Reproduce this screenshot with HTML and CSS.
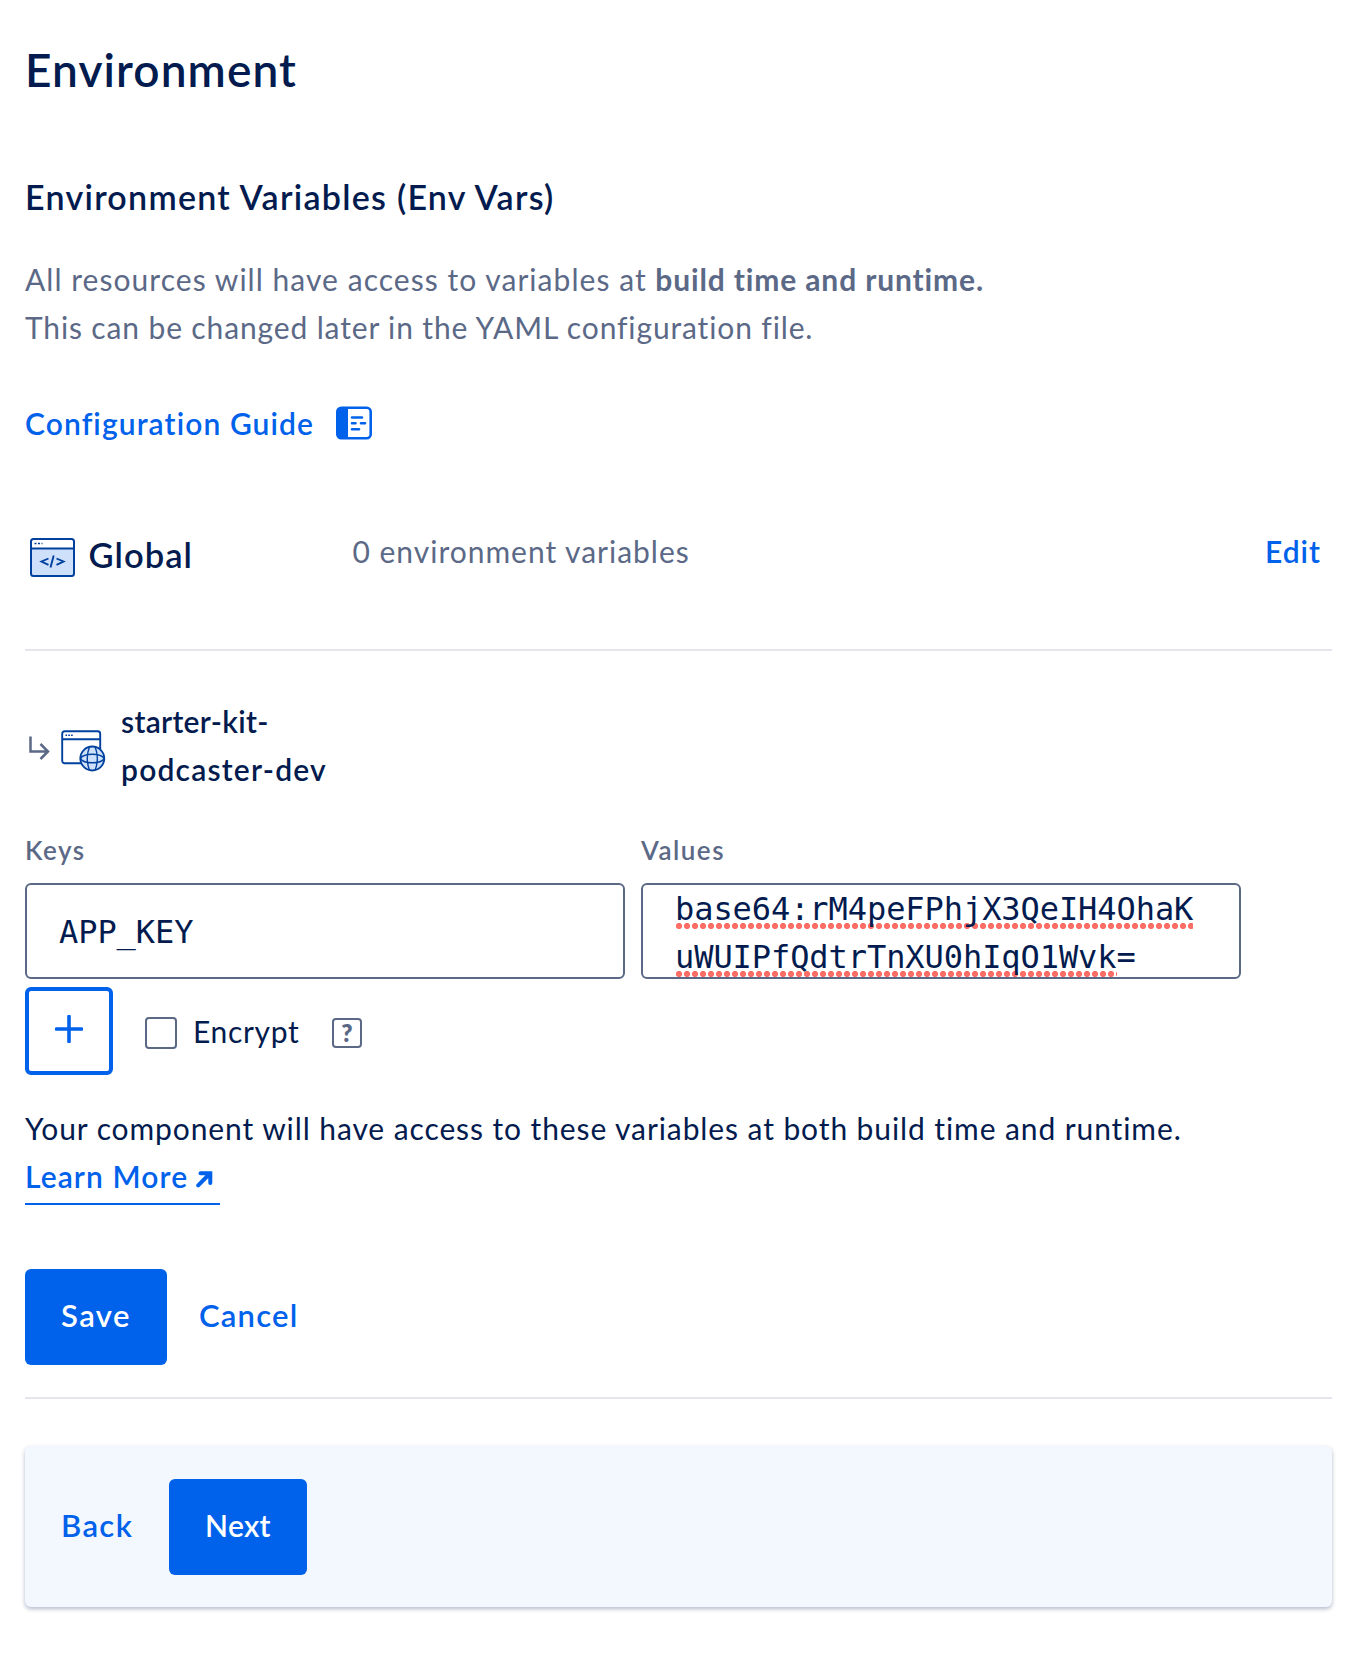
FILE: index.html
```html
<!DOCTYPE html>
<html lang="en">
<head>
<meta charset="utf-8">
<title>Environment</title>
<link rel="stylesheet" href="styles.css">
</head>
<body>
<main class="page">
  <h1 class="title">Environment</h1>
  <h2 class="subtitle">Environment Variables (Env Vars)</h2>
  <p class="intro"><span class="intro-lead">All resources will have access to variables at</span> <strong>build time and runtime.</strong><br>This can be changed later in the YAML configuration file.</p>
  <a class="guide link"><span>Configuration Guide</span>
    <svg class="guide-icon" width="36" height="34" viewBox="0 0 36 34" fill="none" stroke="#0061eb" stroke-width="2.6">
      <rect x="1.3" y="1.7" width="33.4" height="30.6" rx="4"/>
      <path d="M5 1.5H12V32.5H5Q1 32.5 1 28.5V5.5Q1 1.5 5 1.5Z" fill="#0061eb" stroke="none"/>
      <path d="M16 11.5H26M16 17.3H19.5M25 17.3H29M16 23.3H23" stroke-linecap="round" stroke-width="2.6"/>
    </svg>
  </a>

  <section class="global">
    <svg class="global-icon" width="45" height="39" viewBox="0 0 45 39" fill="none" stroke="#00419e" stroke-width="2">
      <path d="M2 11H43V37H2Z" fill="#cfe0fb" stroke="none"/>
      <rect x="1" y="1" width="43" height="37" rx="2.5"/>
      <path d="M1 10.5H44"/>
      <path d="M4.5 5.5H12.5" stroke-dasharray="2 1.5" stroke-width="1.6"/>
      <path d="M18.5 20.5L11.5 23.5L18.5 26.8M26.5 20.5L33.5 23.5L26.5 26.8M23.7 17.5L20.5 29.5" stroke-width="1.9"/>
    </svg>
    <h3 class="global-name">Global</h3>
    <span class="global-count">0 environment variables</span>
    <a class="global-edit link">Edit</a>
  </section>

  <section class="component">
    <header class="component-head">
      <svg class="arrow-icon" width="21" height="24" viewBox="0 0 21 24" fill="none" stroke="#5b6987" stroke-width="2.5">
        <path d="M1.5 .5V15.5H19M11.5 8L19 15.5L11.5 23"/>
      </svg>
      <svg class="web-icon" width="45" height="42" viewBox="0 0 45 42" fill="none" stroke="#00419e" stroke-width="1.9">
        <rect x="1.2" y="1.2" width="38" height="32" rx="2.5"/>
        <path d="M1 9.2H39"/>
        <path d="M4.5 5.2H12" stroke-dasharray="1.6 1.2" stroke-width="1.5"/>
        <circle cx="31.3" cy="28.5" r="12" fill="#cfe0fb" stroke-width="1.8"/>
        <path d="M19.3 28.5Q22 24.3 31.3 24.3T43.3 28.5M19.3 28.5Q22 32.7 31.3 32.7T43.3 28.5M28.5 16.8Q24 28.5 28.5 40.2M34.1 16.8Q38.6 28.5 34.1 40.2" stroke-width="1.4"/>
      </svg>
      <h3 class="component-name"><span class="tight">starter-kit-</span><br>podcaster-dev</h3>
    </header>

    <div class="fields">
      <label class="field"><span class="field-label">Keys</span><span class="box box-key">APP_KEY</span></label>
      <label class="field"><span class="field-label">Values</span><span class="box box-value"><span class="misspelled">base64:rM4peFPhjX3QeIH4OhaK</span><br><span class="misspelled">uWUIPfQdtrTnXU0hIqO1Wvk</span>=</span></label>
    </div>

    <div class="options">
      <button class="add" aria-label="Add">
        <svg width="28" height="28" viewBox="0 0 28 28" stroke="#0061eb" stroke-width="3.6" stroke-linecap="round"><path d="M14 1.5V26.5M1.5 14H26.5"/></svg>
      </button>
      <span class="checkbox"></span>
      <span class="encrypt">Encrypt</span>
      <span class="help">?</span>
    </div>

    <p class="note">Your component will have access to these variables at both build time and runtime.</p>
    <a class="learn link"><span>Learn More</span>
      <svg class="learn-icon" width="17" height="17" viewBox="0 0 17 17" fill="none" stroke="#0061eb" stroke-width="4" stroke-linecap="round"><path d="M2.2 14.3L13 3.5M4.5 2.3H14.3V12"/></svg>
    </a>

    <div class="actions">
      <button class="button button-save">Save</button>
      <a class="cancel link">Cancel</a>
    </div>
  </section>

  <footer class="footer">
    <a class="back link">Back</a>
    <button class="button button-next">Next</button>
  </footer>
</main>
</body>
</html>
```
FILE: styles.css
```css
* { box-sizing: border-box; margin: 0; padding: 0; }
body {
  background: #fff;
  color: #031b4e;
  font: 400 30px/48px Lato, "Open Sans", sans-serif;
}
button { border: 0; font: inherit; }
svg { display: block; flex: none; }
h1, h2, h3 { font-weight: 600; }
.page { width: 1332px; height: 1658px; padding: 42px 0 0 25px; }
.link { color: #0061eb; font-weight: 600; letter-spacing: 1.1px; }

.title { font-size: 46px; line-height: 56px; letter-spacing: 1.1px; }
.subtitle { margin-top: 75px; font-size: 34px; letter-spacing: 1.27px; }
.intro { margin-top: 34px; color: #5b6987; letter-spacing: .86px; white-space: nowrap; }
.intro-lead { letter-spacing: 1.04px; }
.intro strong { font-weight: 700; letter-spacing: .86px; }
.guide { display: flex; align-items: center; gap: 22px; margin-top: 48px; }

.global { display: flex; height: 126px; margin-top: 78px; padding-top: 2px; border-bottom: 2px solid #e5e5ed; }
.global-icon { margin: 11px 14px 0 4.500px; }
.global-name { width: 264px; margin-top: 4px; font-size: 34.5px; letter-spacing: 1.03px; }
.global-count { color: #5b6987; letter-spacing: .98px; }
.global-edit { margin-left: auto; padding-right: 11px; letter-spacing: 1px; }

.component { padding-bottom: 32px; border-bottom: 2px solid #e5e5ed; }
.component-head { display: flex; padding-top: 45px; }
.arrow-icon { margin: 40px 0 0 4px; }
.web-icon { margin: 34px 15px 0 11px; }
.component-name { margin-top: 1px; font-size: 30px; letter-spacing: 1.2px; }
.tight { letter-spacing: .3px; }

.fields { display: flex; gap: 16px; margin-top: 38px; }
.field { display: block; width: 600px; }
.field-label { display: block; margin-bottom: 13px; color: #5b6987; font-size: 26px; font-weight: 600; line-height: 39px; letter-spacing: 1.5px; }
.box {
  display: block;
  height: 96px;
  overflow: hidden;
  padding: 0 32px;
  border: 2px solid #5b6987;
  border-radius: 6px;
  background: #fff;
  font-family: "DejaVu Sans Mono", monospace;
  font-size: 32px;
  letter-spacing: -.07px;
}
.box-key { padding-top: 23px; }
.misspelled {
  padding-bottom: 1px;
  background: radial-gradient(circle at 4px 3px, #ff6e66 2.8px, transparent 3.3px) 0 100% / 8px 6px repeat-x;
}

.options { display: flex; align-items: center; height: 88px; margin-top: 8px; }
.add { display: flex; justify-content: center; width: 88px; height: 88px; padding-top: 24px; border: 4px solid #0061eb; border-radius: 6px; background: #fff; }
.checkbox { width: 32px; height: 32px; margin: 4px 16px 0 32px; border: 2px solid #5b6987; border-radius: 4px; }
.encrypt { width: 139px; letter-spacing: .67px; }
.help { width: 30px; height: 30px; margin-top: 4px; border: 2px solid #5b6987; border-radius: 4px; color: #5b6987; font-size: 24px; font-weight: 800; line-height: 26px; text-align: center; }

.note { margin-top: 29px; letter-spacing: .9px; white-space: nowrap; }
.learn { display: flex; gap: 8px; width: 195px; height: 53px; border-bottom: 2px solid #0061eb; }
.learn-icon { margin-top: 19px; }

.actions { display: flex; align-items: center; margin-top: 64px; }
.button { height: 96px; padding-bottom: 4px; border-radius: 6px; background: #0061eb; color: #fff; font-weight: 600; }
.button-save { width: 142px; font-size: 31px; letter-spacing: 1.5px; }
.cancel { margin-left: 32px; padding-bottom: 4px; font-size: 31px; letter-spacing: 1.2px; }

.footer { display: flex; align-items: center; width: 1307px; height: 161px; margin-top: 47px; padding-left: 36px; border-radius: 6px; background: #f3f7fe; box-shadow: 0 2px 4px rgba(3, 27, 78, .3); }
.back { width: 108px; padding-bottom: 4px; font-size: 31px; letter-spacing: 1.4px; }
.button-next { width: 138px; letter-spacing: .3px; }
```
